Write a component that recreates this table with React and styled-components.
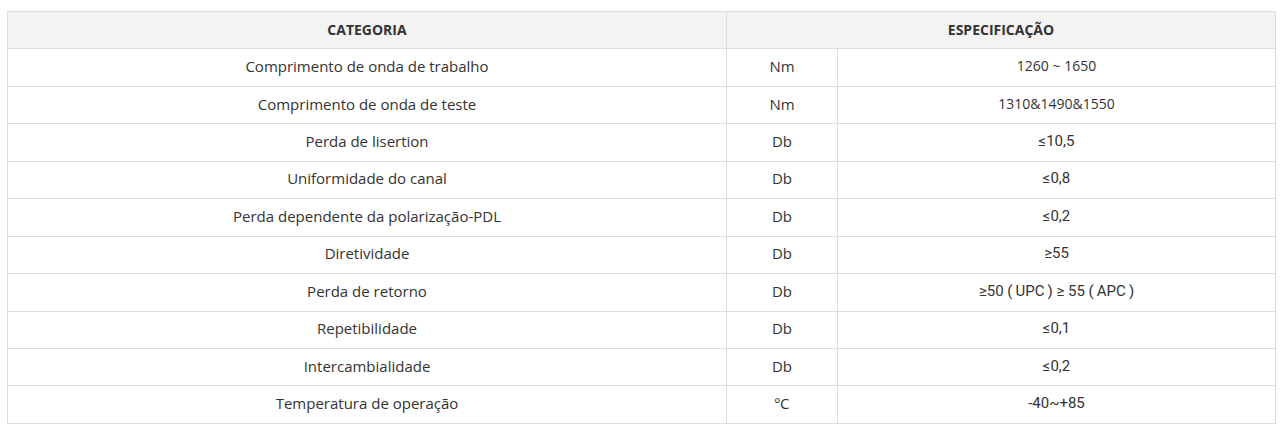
import React from "react";
import styled, { createGlobalStyle } from "styled-components";

const Global = createGlobalStyle`
  html, body { margin: 0; padding: 0; background: #fff; }
  body { font-family: "Open Sans", "Liberation Sans", sans-serif; color: #333; }
`;

const Wrap = styled.div`
  padding: 11px 8px 0 7px;
`;

const Table = styled.table`
  width: 1268px;
  border-collapse: collapse;
  table-layout: fixed;
`;

const Th = styled.th`
  height: 35.45px;
  padding: 0 0 1px;
  background: #f3f3f3;
  border: 1px solid #dddddd;
  font-size: 14px;
  line-height: 20px;
  font-weight: 700;
  color: #333;
  text-align: center;
  vertical-align: middle;
`;

const Td = styled.td`
  height: 33.45px;
  padding: 0 0 3px;
  border: 1px solid #dddddd;
  font-family: ${(p) => (p.$roboto ? 'Roboto, "Liberation Sans", sans-serif' : 'inherit')};
  font-size: ${(p) => (p.$size || 15)}px;
  line-height: 20px;
  color: #333;
  text-align: center;
  vertical-align: middle;
`;

const rows = [
  ["Comprimento de onda de trabalho", "Nm", "1260 ~ 1650", false],
  ["Comprimento de onda de teste", "Nm", "1310&1490&1550", false],
  ["Perda de lisertion", "Db", "≤10,5", true],
  ["Uniformidade do canal", "Db", "≤0,8", true],
  ["Perda dependente da polarização-PDL", "Db", "≤0,2", true],
  ["Diretividade", "Db", "≥55", true],
  ["Perda de retorno", "Db", "≥50 (\u2009UPC\u2009) ≥ 55 (\u2009APC\u2009)", true],
  ["Repetibilidade", "Db", "≤0,1", true],
  ["Intercambialidade", "Db", "≤0,2", true],
  ["Temperatura de operação", "ºC", "-40~+85", true],
];

export default function App() {
  return (
    <>
      <Global />
      <Wrap>
        <Table>
          <colgroup>
            <col style={{ width: 719 }} />
            <col style={{ width: 111 }} />
            <col style={{ width: 438 }} />
          </colgroup>
          <thead>
            <tr>
              <Th>CATEGORIA</Th>
              <Th colSpan={2}>ESPECIFICAÇÃO</Th>
            </tr>
          </thead>
          <tbody>
            {rows.map(([a, b, c, r]) => (
              <tr key={a}>
                <Td>{a}</Td>
                <Td>{b}</Td>
                <Td $roboto={r} $size={r ? 15 : 14}>{c}</Td>
              </tr>
            ))}
          </tbody>
        </Table>
      </Wrap>
    </>
  );
}
